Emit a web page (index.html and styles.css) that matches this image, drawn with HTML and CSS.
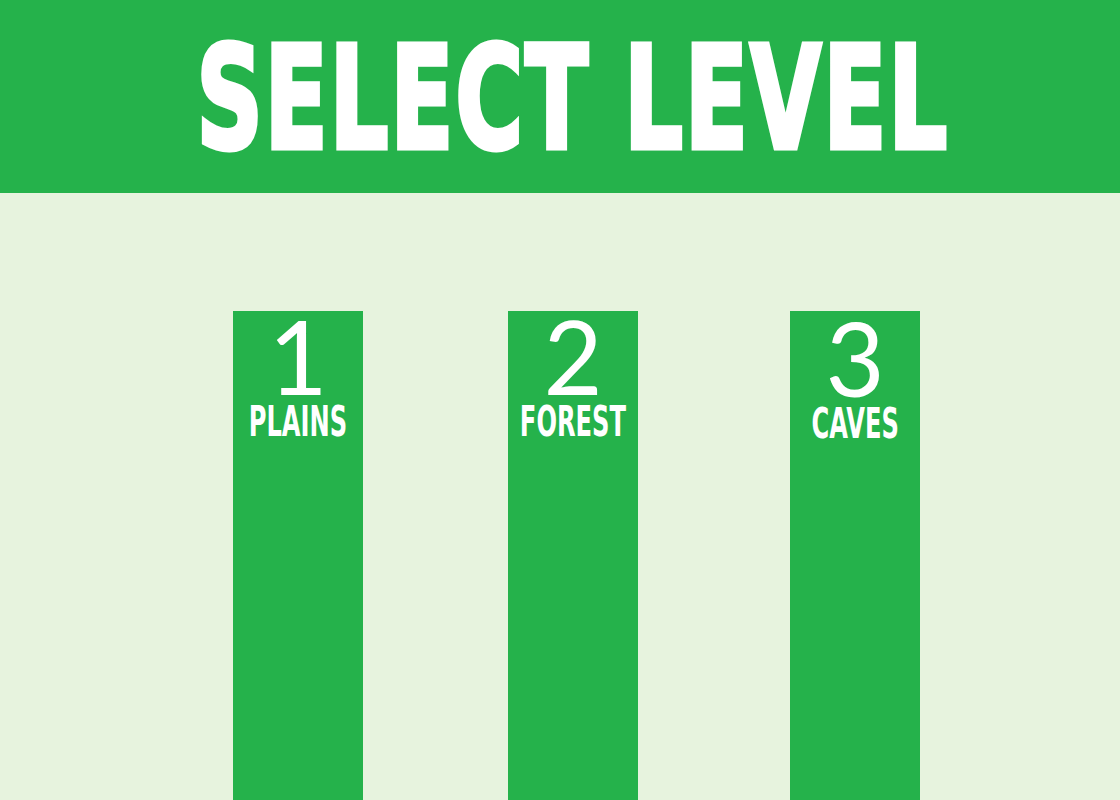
FILE: index.html
```html
<!DOCTYPE html>
<html>
<head>
<meta charset="utf-8">
<link rel="stylesheet" href="styles.css">
</head>
<body>
<header class="header">
  <h1 class="title"><span class="title-text">SELECT LEVEL</span></h1>
</header>
<main class="levels">
  <div class="level level-1">
    <div class="num">1</div>
    <div class="name"><span class="name-text">PLAINS</span></div>
  </div>
  <div class="level level-2">
    <div class="num">2</div>
    <div class="name"><span class="name-text">FOREST</span></div>
  </div>
  <div class="level level-3">
    <div class="num">3</div>
    <div class="name"><span class="name-text">CAVES</span></div>
  </div>
</main>
</body>
</html>
```
FILE: styles.css
```css
html, body {
  margin: 0;
  padding: 0;
}
body {
  width: 1120px;
  height: 800px;
  overflow: hidden;
  background: #e7f3de;
  font-family: "DejaVu Sans", sans-serif;
}
.header {
  height: 193px;
  background: #25b24b;
  display: flex;
  align-items: center;
  justify-content: center;
  padding-left: 26px;
  padding-top: 4px;
  box-sizing: border-box;
}
.title {
  margin: 0;
  font-weight: bold;
  font-size: 142px;
  line-height: 1;
  color: #fff;
}
.title-text {
  display: inline-block;
  font-family: "DejaVu Sans Condensed", "DejaVu Sans", sans-serif;
  font-weight: bold;
  transform: scaleX(0.72);
  white-space: nowrap;
  letter-spacing: 3px;
  -webkit-text-stroke: 5px #fff;
}
.levels {
  display: flex;
  align-items: flex-start;
  padding-top: 118px;
  padding-left: 233px;
  gap: 145px;
}
.level {
  width: 130px;
  height: 489px;
  background: #25b24b;
  color: #fff;
  display: flex;
  flex-direction: column;
  align-items: center;
}
.level-3 {
  margin-left: 7px;
}
.num {
  font-family: Lato, sans-serif;
  font-weight: 400;
  font-size: 102px;
  line-height: 74px;
  margin-top: 8px;
}
.name {
  font-size: 42px;
  font-weight: bold;
  line-height: 32px;
  margin-top: 13px;
  white-space: nowrap;
}
.name-text {
  display: inline-block;
  font-family: "DejaVu Sans Condensed", "DejaVu Sans", sans-serif;
  font-weight: bold;
  transform: scaleX(0.64);
}
.level-3 .num {
  margin-top: 10px;
}
.level-3 .name {
  margin-top: 13px;
}
```
